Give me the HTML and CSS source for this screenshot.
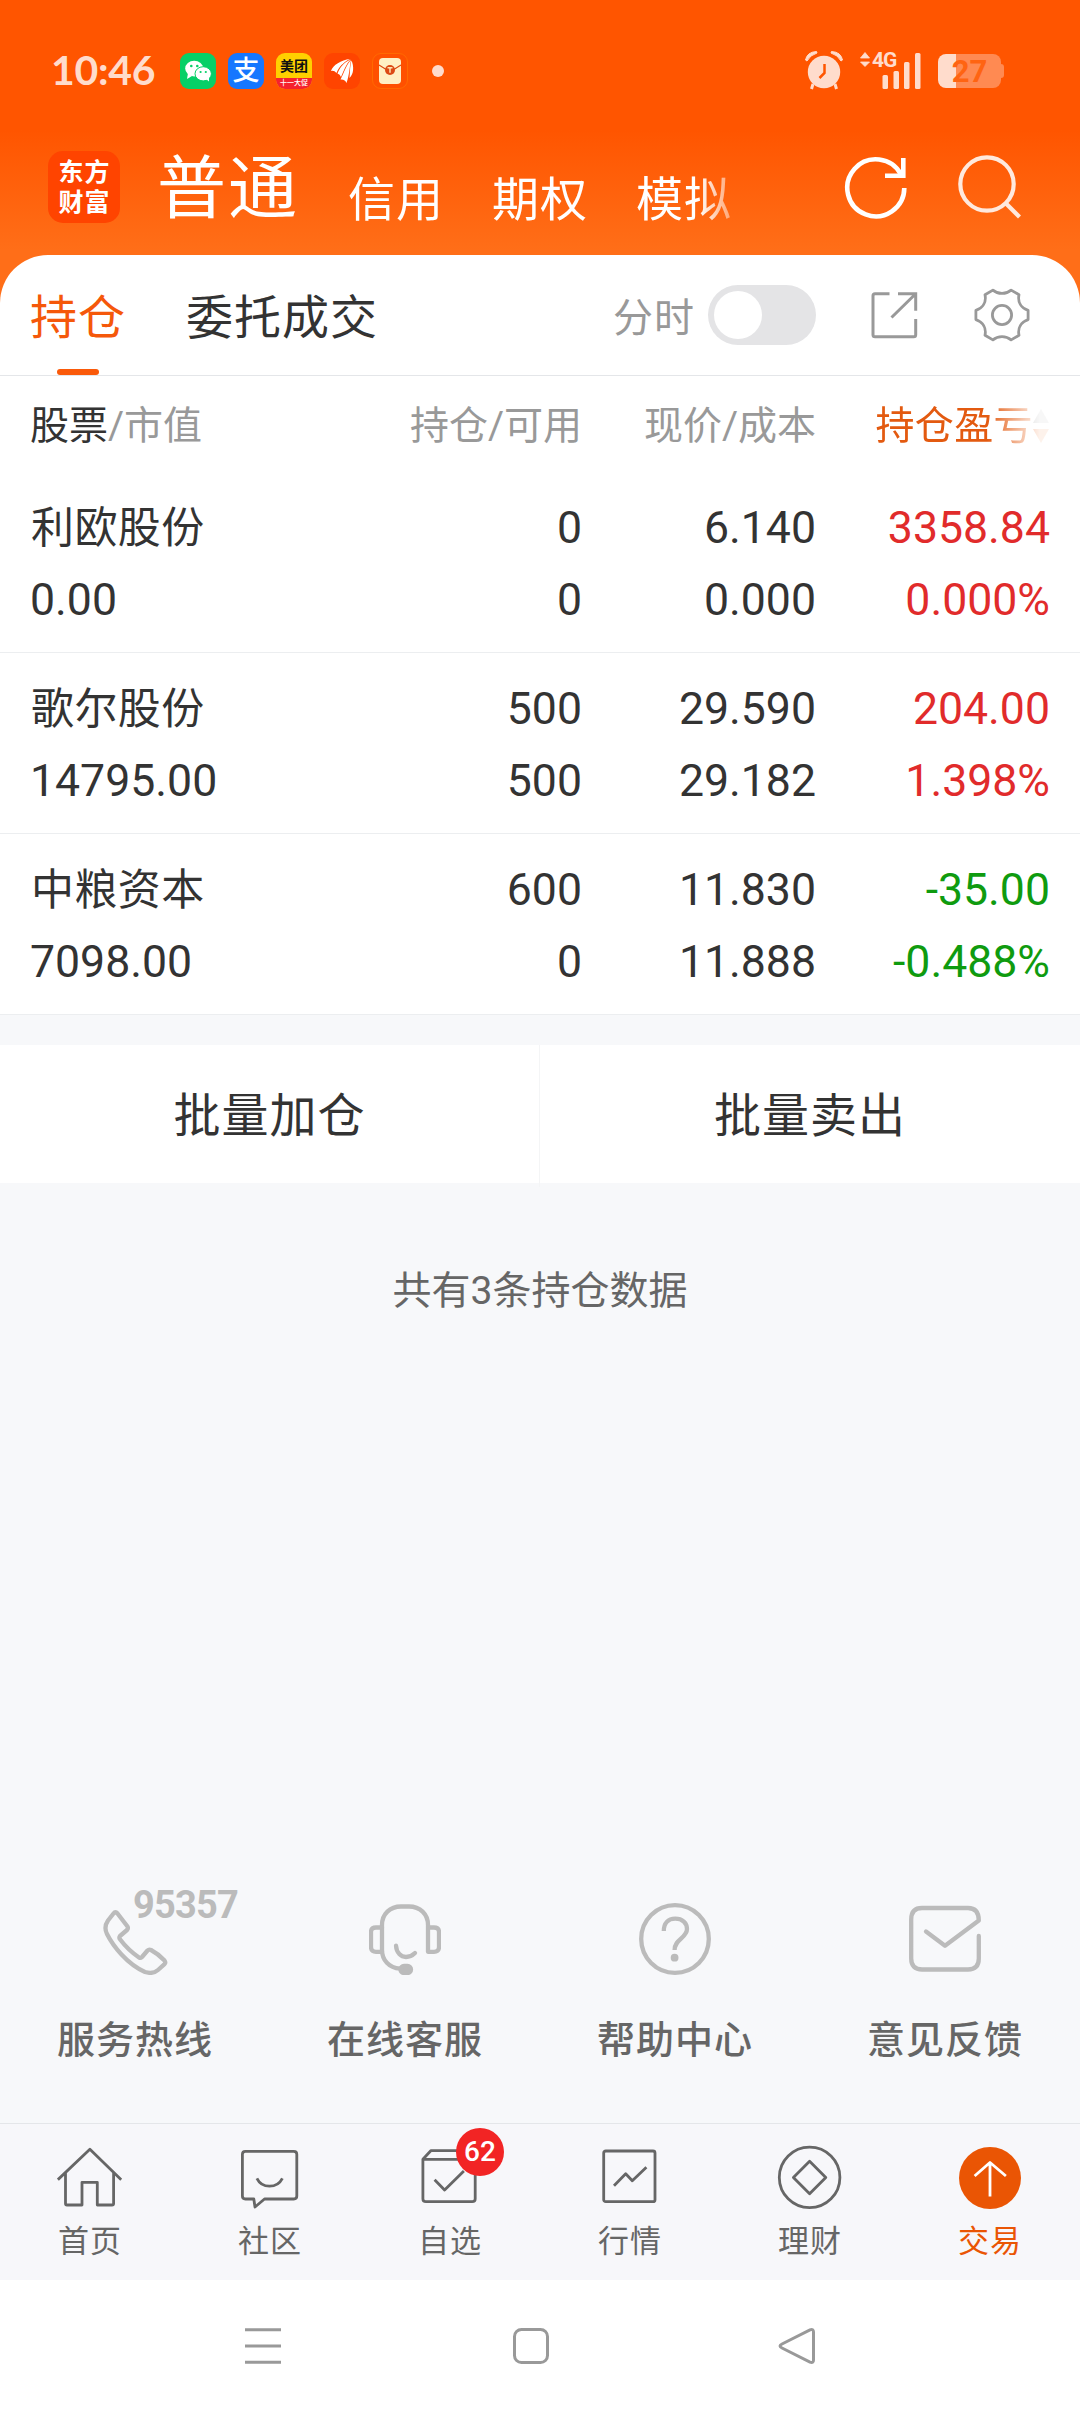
FILE: index.html
```html
<!DOCTYPE html>
<html lang="zh-CN">
<head>
  <meta charset="UTF-8" />
  <meta name="viewport" content="width=device-width, initial-scale=1.0" />
  <title>交易 - 持仓</title>
  <link rel="stylesheet" href="styles.css">
</head>
<body>
  <header class="top">
    <!-- Status bar -->
    <div class="status">
      <span class="time">10:46</span>
      <div class="apps">
        <span class="app wechat">
          <svg viewBox="0 0 36 36">
            <ellipse cx="14.2" cy="15.6" rx="9" ry="7.8" fill="#fff"/>
            <path d="M8 20l-1 6 5-3z" fill="#fff"/>
            <ellipse cx="23.2" cy="20.8" rx="8.2" ry="7.1" fill="#fff" stroke="#06d067" stroke-width="1"/>
            <path d="M26 26l3 2.6V24z" fill="#fff"/>
            <circle cx="11.3" cy="13" r="1.3" fill="#06d067"/><circle cx="17.3" cy="13" r="1.3" fill="#06d067"/>
            <circle cx="20.6" cy="19" r="1.1" fill="#06d067"/><circle cx="25.8" cy="19" r="1.1" fill="#06d067"/>
          </svg>
        </span>
        <span class="app alipay">支</span>
        <span class="app meituan"><b>美团</b><i>十一大促</i></span>
        <span class="app east">
          <svg viewBox="0 0 36 36" fill="#fff">
            <path d="M7 18C9 12 17 7 26 6C19 9.500 15 14 12.500 20Q10 17 7 18Z"/>
            <path d="M13.500 20.500C16 14 20 9.500 26.500 6.500C22 11.500 20 17 17 24Q16 21 13.500 20.500Z"/>
            <path d="M16.500 26.500C20 20 22 12 27 7C25.500 14 25.500 22 22.500 30Q21 26 16.500 26.500Z"/>
            <path d="M25.500 25C26 18 26 12 27.500 7.500C30 13 30 21 25.500 25Z"/>
          </svg>
        </span>
        <span class="app packet">
          <svg viewBox="0 0 36 36">
            <rect x="7" y="5" width="22" height="26" rx="4" fill="#fff0c4"/>
            <path d="M7 12l8 5M29 12l-8 5" stroke="#dc4a14" stroke-width="1.200" fill="none"/>
            <circle cx="18" cy="17" r="5" fill="#dc4a14"/>
            <path d="M15.500 14.800h5M18 14.800v5" stroke="#ffe2ae" stroke-width="1.500"/>
          </svg>
        </span>
        <span class="dot"></span>
      </div>
      <div class="signals">
        <svg class="alarm" viewBox="0 0 38 40" fill="#ffdccc">
          <circle cx="19" cy="22" r="16.200"/>
          <path d="M.5 10Q2 2 11.500 1.500L12 3Q5 5 2 11ZM37.500 10Q36 2 26.500 1.500L26 3Q33 5 36 11Z" stroke="#ffdccc" stroke-width="1"/>
          <path d="M8 34l-1.500 5M30 34l1.500 5" stroke="#ffdccc" stroke-width="3"/>
          <path d="M19.500 14v9l-5 5" stroke="#ff5500" stroke-width="2.500" fill="none"/>
        </svg>
        <div class="mobile">
          <svg viewBox="0 0 62 38" fill="#ffdccc">
            <path d="M.5 7L5 1.500L9.500 7ZM.5 11L5 15.500L9.500 11Z" stroke="#ffdccc" stroke-width=".8"/>
            <rect x="22.500" y="24" width="5.500" height="14" rx="1.500"/>
            <rect x="33.500" y="20" width="5.500" height="18" rx="1.500"/>
            <rect x="44" y="11" width="5.500" height="27" rx="1.500"/>
            <rect x="55" y="2" width="5.500" height="36" rx="1.500"/>
          </svg>
          <span class="net">4G</span>
        </div>
        <div class="battery"><span>27</span></div>
      </div>
    </div>

    <!-- Account types -->
    <div class="title-row">
      <div class="logo">东方<br>财富</div>
      <div class="current">普通</div>
      <nav class="accounts">
        <span>信用</span>
        <span>期权</span>
        <span>模拟</span>
      </nav>
      <svg class="refresh" viewBox="0 0 64 64" fill="none" stroke="#fff" stroke-width="4.600">
        <path d="M60.300 33A28.500 28.500 0 1 1 57 19.500"/>
        <path d="M59.300 3V20.700H41"/>
      </svg>
      <svg class="search" viewBox="0 0 64 64" fill="none" stroke="#ffe9dd" stroke-width="4.200">
        <circle cx="29" cy="29" r="26.700"/>
        <path d="M48 48.500L61.500 62"/>
      </svg>
    </div>
  </header>

  <main class="panel">
    <div class="toolbar">
      <span class="tab active">持仓</span>
      <span class="tab">委托成交</span>
      <span class="switch-label">分时</span>
      <span class="switch"></span>
      <svg class="share" viewBox="0 0 48 48" fill="none" stroke="#999" stroke-width="3">
        <path d="M19.500 2.700H5Q3 2.700 3 4.700V43.700Q3 45.700 5 45.700H43.700Q45.700 45.700 45.700 43.700V28"/>
        <path d="M28 2.700H45.700V19.700M45.700 2.700L21.500 26.500"/>
      </svg>
      <svg class="gear" viewBox="-28 -28 56 56" fill="none" stroke="#999" stroke-width="2.800" stroke-linejoin="round">
        <path d="M26.100 4.600C19 7 15.500 13 17 20.300L9.100 24.900C4 20.500-4 20.500-9.100 24.900L-17 20.300C-15.500 13-19 7-26.100 4.600V-4.600C-19-7-15.500-13-17-20.300L-9.100-24.900C-4-20.500 4-20.500 9.100-24.900L17-20.300C15.500-13 19-7 26.100-4.600Z"/>
        <circle r="9.600"/>
      </svg>
    </div>

    <div class="grid head">
      <span><em>股票</em>/市值</span>
      <span>持仓/可用</span>
      <span>现价/成本</span>
      <span class="sort">持仓盈亏
        <svg viewBox="0 0 16 36"><path d="M0 15L8 1L16 15Z" fill="#999"/><path d="M0 21L8 35L16 21Z" fill="#ea5504"/></svg>
      </span>
    </div>

    <div class="grid row">
      <span class="name">利欧股份</span><span>0</span><span>6.140</span><span class="up">3358.84</span>
      <span>0.00</span><span>0</span><span>0.000</span><span class="up">0.000%</span>
    </div>
    <div class="grid row">
      <span class="name">歌尔股份</span><span>500</span><span>29.590</span><span class="up">204.00</span>
      <span>14795.00</span><span>500</span><span>29.182</span><span class="up">1.398%</span>
    </div>
    <div class="grid row">
      <span class="name">中粮资本</span><span>600</span><span>11.830</span><span class="down">-35.00</span>
      <span>7098.00</span><span>0</span><span>11.888</span><span class="down">-0.488%</span>
    </div>
  </main>

  <div class="batch">
    <span>批量加仓</span>
    <span>批量卖出</span>
  </div>

  <p class="count">共有3条持仓数据</p>

  <!-- Help entries -->
  <section class="services">
    <div class="service">
      <svg viewBox="0 0 72 72">
        <path d="M14.500 10.500Q16.400 8 18.500 10.500L28.500 23.500Q29.500 25.300 28 27L21 33Q19.800 34.700 21 36.300Q29 47 40 54.500Q41.500 55.500 43 54L48.500 47.500Q50 46 52 47Q59.500 51 65.500 57.500Q67 59.500 65.500 61.200L59 67Q54 71.500 46 69C28 61 14 43 8 31Q4.500 24 9 17.500Z"/>
      </svg>
      <span class="hotline">95357</span>
      <span>服务热线</span>
    </div>
    <div class="service">
      <svg viewBox="0 0 72 72">
        <path d="M31 65.700C20 65 13 57 13 47V22C13 11 21 3.500 32 3.500H40C51 3.500 59 11 59 22V48.800H65Q70 48.800 70 44V29Q70 24.500 65 24.500H59"/>
        <path d="M13 24.500H7Q2 24.500 2 29V44Q2 48.800 7 48.800H13"/>
        <path d="M27 42.700C27.500 50 32 54 37 54Q42 54 46 50"/>
        <rect x="31.500" y="63" width="10.500" height="7" rx="3.500" fill="#bbb"/>
      </svg>
      <span>在线客服</span>
    </div>
    <div class="service">
      <svg viewBox="0 0 72 72">
        <circle cx="36" cy="36" r="33.800"/>
        <path class="butt" d="M24.800 28C24.800 20 29 15.700 36.200 15.700C43.500 15.700 48 20 48 26C48 35 35.600 36 35.600 47"/>
        <circle cx="35.600" cy="54.700" r="3.900" class="solid"/>
      </svg>
      <span>帮助中心</span>
    </div>
    <div class="service">
      <svg viewBox="0 0 72 72">
        <path d="M69.800 33V55.500Q69.800 66.500 59 66.500H13Q2.200 66.500 2.200 55.500V16.500Q2.200 5 13 5H59Q69.800 5 69.800 17.500L36 42.700L17 28.500"/>
      </svg>
      <span>意见反馈</span>
    </div>
  </section>

  <!-- Bottom tabs -->
  <nav class="tabbar">
    <a class="item">
      <svg viewBox="0 0 66 66">
        <path d="M.9 34.700L32.900 4.300L64.200 34.700M8.500 28V58.500Q8.500 60 10 60H25V37.300H40.300V60H55Q56.600 60 56.600 58.500V28"/>
      </svg>
      <span>首页</span>
    </a>
    <a class="item">
      <svg viewBox="0 0 66 66">
        <path d="M8.400 6.300H56.800Q59.800 6.300 59.800 9.300V51Q59.800 54 56.800 54H27.500L18 62L16.800 54H8.400Q5.400 54 5.400 51V9.300Q5.400 6.300 8.400 6.300Z"/>
        <path d="M19.900 33.300C25 43.800 40 43.800 45.400 33.300"/>
      </svg>
      <span>社区</span>
    </a>
    <a class="item">
      <svg viewBox="0 0 66 66">
        <path d="M5.900 14.300V53.700Q5.900 56.700 8.900 56.700H55.200Q58.200 56.700 58.200 53.700V14.300L50 5.700H13.800L5.900 14.300H58.200"/>
        <path d="M17.600 34.700L27.600 45L46.900 26"/>
      </svg>
      <b class="badge">62</b>
      <span>自选</span>
    </a>
    <a class="item">
      <svg viewBox="0 0 66 66">
        <rect x="6.700" y="6" width="51.300" height="50.700" rx="2"/>
        <path d="M17 40.700L28.700 28.700L35.300 35.700L49.400 22.300"/>
      </svg>
      <span>行情</span>
    </a>
    <a class="item">
      <svg viewBox="0 0 66 66">
        <circle cx="32.600" cy="32.400" r="30.300"/>
        <path d="M32.600 16.300L48.800 32.400L32.600 48.700L16.400 32.400Z"/>
      </svg>
      <span>理财</span>
    </a>
    <a class="item on">
      <svg viewBox="0 0 66 66">
        <circle cx="33" cy="33" r="31"/>
        <path d="M33 51.500V17.500M17.600 31L33 17.500L48.900 31"/>
      </svg>
      <span>交易</span>
    </a>
  </nav>

  <!-- System navigation -->
  <div class="sysnav">
    <svg viewBox="0 0 38 38"><path d="M1 2.700H37M1 19H37M1 35.300H37"/></svg>
    <svg viewBox="0 0 38 38"><rect x="2.500" y="2.500" width="33" height="33" rx="7"/></svg>
    <svg viewBox="0 0 38 38"><path d="M32 2.800Q35.500 1.500 35.500 5V33Q35.500 36.500 32 35.200L4 21Q0 19 4 17Z"/></svg>
  </div>
</body>
</html>
```
FILE: styles.css
```css
:root {
  --orange: #ea5504;
  --text: #333;
  --muted: #999;
  --page: #f7f8fa;
  --line: #e4e6e9;
}

* {
  box-sizing: border-box;
  margin: 0;
  padding: 0;
}

body {
  width: 1080px;
  height: 2412px;
  background-color: var(--page);
  color: var(--text);
  font-family: Roboto, "Noto Sans CJK SC", sans-serif;
  display: flex;
  flex-direction: column;
  overflow: hidden;
}

svg {
  display: block;
  flex: none;
}

em,
i {
  font-style: normal;
}

/* Header */
.top {
  height: 303px;
  background: linear-gradient(#ff5500 0, #ff5500 130px, #ff6e18 250px);
}

.status {
  display: flex;
  align-items: center;
  height: 142px;
  padding: 0 79px 0 51px;
}

.time {
  width: 129px;
  margin-top: -3px;
  font: 700 41px/48px Lato, sans-serif;
  letter-spacing: -0.3px;
  color: #ffdccc;
}

.apps {
  display: flex;
  align-items: center;
  gap: 12px;
}

.app {
  width: 36px;
  height: 36px;
  border-radius: 9px;
  overflow: hidden;
  color: #fff;
  text-align: center;
}

.wechat {
  background-color: #06d067;
}

.alipay {
  background-color: #1677ff;
  font-size: 27px;
  font-weight: 500;
  line-height: 37px;
}

.meituan {
  display: flex;
  flex-direction: column;
  background-color: #ffd000;
}

.meituan b {
  font-size: 14px;
  line-height: 25px;
  height: 25px;
  padding-top: 1px;
  color: #111;
}

.meituan i {
  height: 11px;
  background-color: #f5222d;
  font-size: 7px;
  font-weight: 500;
  line-height: 11px;
}

.east {
  background-color: #ff4400;
}

.packet {
  border: 1px solid #ff6a00;
  background-color: #ff5000;
}

.packet svg {
  margin: -1px;
  width: 36px;
}

.dot {
  width: 12px;
  height: 12px;
  margin-left: 12px;
  border-radius: 50%;
  background-color: #ffdccc;
}

.signals {
  display: flex;
  align-items: center;
  margin-left: auto;
}

.alarm {
  width: 38px;
  height: 40px;
  margin-right: 17px;
  margin-top: -3px;
}

.mobile {
  position: relative;
  margin-top: -3px;
  margin-right: 16px;
}

.mobile svg {
  width: 62px;
  height: 38px;
}

.net {
  position: absolute;
  left: 12px;
  top: -2px;
  font-size: 21px;
  font-weight: 700;
  line-height: 22px;
  letter-spacing: -1px;
  color: #ffdccc;
}

.battery {
  position: relative;
  width: 63px;
  height: 34px;
  border-radius: 8px;
  background: linear-gradient(to right, #ffdccc 18px, #ff8a52 18px);
  color: #ff6412;
  font-size: 31px;
  font-weight: 700;
  line-height: 36px;
  text-align: center;
}

.battery::after {
  content: "";
  position: absolute;
  right: -3px;
  top: 10px;
  width: 3px;
  height: 14px;
  border-radius: 0 3px 3px 0;
  background-color: #ff8a52;
}

.title-row {
  display: flex;
  align-items: center;
  height: 90px;
  padding: 0 58px 0 48px;
  color: #fff;
}

.logo {
  width: 72px;
  height: 72px;
  padding: 7px 0 0 1px;
  border-radius: 15px;
  background-color: #ff4400;
  font-size: 25px;
  font-weight: 700;
  line-height: 30px;
  letter-spacing: 1px;
  text-align: center;
}

.current {
  margin: 5px 0 0 37px;
  font-size: 69px;
  line-height: 85px;
  letter-spacing: 2px;
}

.accounts {
  display: flex;
  gap: 48px;
  margin: 25px 0 0 49px;
  font-size: 47px;
  line-height: 60px;
  letter-spacing: 1px;
  -webkit-mask-image: linear-gradient(to right, #000 350px, rgba(0, 0, 0, 0.4) 384px);
  mask-image: linear-gradient(to right, #000 350px, rgba(0, 0, 0, 0.4) 384px);
}

.refresh,
.search {
  width: 64px;
  height: 64px;
}

.refresh {
  margin-left: auto;
  margin-right: 50px;
}

/* Holdings */
.panel {
  margin-top: -48px;
  border-radius: 48px 48px 0 0;
  background-color: #fff;
}

.toolbar {
  display: flex;
  align-items: center;
  height: 121px;
  padding: 0 50px 0 30px;
  border-bottom: 1px solid var(--line);
}

.tab {
  position: relative;
  height: 120px;
  margin-right: 60px;
  font-size: 47px;
  line-height: 125px;
  letter-spacing: 1px;
}

.tab.active {
  color: #f5580a;
}

.tab.active::after {
  content: "";
  position: absolute;
  left: 27px;
  bottom: 0;
  width: 42px;
  height: 6px;
  border-radius: 3px;
  background-color: #fa5a0a;
}

.switch-label {
  margin-left: auto;
  font-size: 40px;
  letter-spacing: 1px;
  color: var(--muted);
}

.switch {
  width: 108px;
  height: 60px;
  margin: 0 54px 0 13px;
  padding: 6px;
  border-radius: 30px;
  background-color: #e4e4e6;
}

.switch::before {
  content: "";
  display: block;
  width: 48px;
  height: 48px;
  border-radius: 50%;
  background-color: #fff;
}

.share {
  width: 48px;
  height: 48px;
}

.gear {
  width: 56px;
  height: 56px;
  margin-left: 56px;
}

.grid {
  display: grid;
  grid-template-columns: 252px 300px 234px 234px;
  align-content: start;
  padding: 0 30px;
  text-align: right;
}

.grid span:nth-child(4n + 1) {
  text-align: left;
}

.head {
  height: 96px;
  padding-top: 2px;
  font-size: 39px;
  line-height: 96px;
  color: var(--muted);
}

.head em {
  color: var(--text);
}

.sort {
  display: flex;
  align-items: center;
  justify-content: flex-end;
  width: 175px;
  height: 96px;
  margin-left: auto;
  color: #e35a10;
  letter-spacing: 0.4px;
  -webkit-mask-image: linear-gradient(to right, #000 64%, rgba(0, 0, 0, 0.3) 86%, rgba(0, 0, 0, 0.08) 94%);
  mask-image: linear-gradient(to right, #000 64%, rgba(0, 0, 0, 0.3) 86%, rgba(0, 0, 0, 0.08) 94%);
}

.sort svg {
  width: 16px;
  height: 36px;
  margin-right: 1px;
}

.row {
  height: 181px;
  padding-top: 20px;
  border-bottom: 1px solid #eceef0;
  font-size: 44.6px;
  line-height: 72px;
}

.row .name {
  padding-left: 1px;
  padding-top: 1px;
  font-size: 43px;
  line-height: 71px;
  letter-spacing: 0.4px;
}

.up {
  color: #e12b2b;
}

.down {
  color: #0f9b0f;
}

.batch {
  display: grid;
  grid-template-columns: 539px 541px;
  height: 138px;
  margin-top: 30px;
  background-color: #fff;
  font-size: 47px;
  line-height: 142px;
  letter-spacing: 1px;
  text-align: center;
}

.batch span + span {
  border-left: 1px solid #f4f5f6;
}

.count {
  margin-top: 77px;
  font-size: 39px;
  line-height: 62px;
  text-align: center;
  color: #666;
}

/* Help entries */
.services {
  display: grid;
  grid-template-columns: repeat(4, 1fr);
  margin-top: auto;
  height: 220px;
}

.service {
  position: relative;
  display: flex;
  flex-direction: column;
  align-items: center;
  color: #666;
  font-size: 38px;
  font-weight: 500;
  line-height: 50px;
  letter-spacing: 1px;
}

.service svg {
  width: 72px;
  height: 72px;
  margin-bottom: 40px;
  fill: none;
  stroke: #bbb;
  stroke-width: 4.3;
  stroke-linecap: round;
  stroke-linejoin: round;
}

.service .butt {
  stroke-linecap: butt;
}

.service .solid {
  fill: #bbb;
  stroke: none;
}

.hotline {
  position: absolute;
  left: 133px;
  top: -20px;
  font-size: 38px;
  font-weight: 700;
  line-height: 44px;
  letter-spacing: -0.8px;
  color: #bbb;
}

/* Bottom tabs */
.tabbar {
  display: grid;
  grid-template-columns: repeat(6, 1fr);
  height: 157px;
  padding-top: 21px;
  border-top: 1px solid var(--line);
  background-color: #f7f7fa;
}

.item {
  position: relative;
  display: flex;
  flex-direction: column;
  align-items: center;
  color: #666;
  font-size: 31px;
  line-height: 38px;
  letter-spacing: 1px;
}

.item svg {
  width: 66px;
  height: 66px;
  margin-bottom: 12px;
  fill: none;
  stroke: #666;
  stroke-width: 2.8;
  stroke-linejoin: round;
}

.badge {
  position: absolute;
  left: 96px;
  top: -17px;
  width: 48px;
  height: 48px;
  border-radius: 50%;
  background-color: #f22424;
  color: #fff;
  font-size: 28px;
  font-weight: 500;
  line-height: 48px;
  letter-spacing: 0;
  text-align: center;
}

.item.on {
  color: var(--orange);
}

.item.on svg {
  stroke: #fff;
}

.item.on circle {
  fill: var(--orange);
  stroke: none;
}

.sysnav {
  display: flex;
  justify-content: space-between;
  height: 132px;
  padding: 47px 264px 0 244px;
  background-color: #fff;
}

.sysnav svg {
  width: 38px;
  height: 38px;
  fill: none;
  stroke: #999;
  stroke-width: 3;
}

.sysnav svg:nth-child(2) {
  margin-left: 2px;
}
```
